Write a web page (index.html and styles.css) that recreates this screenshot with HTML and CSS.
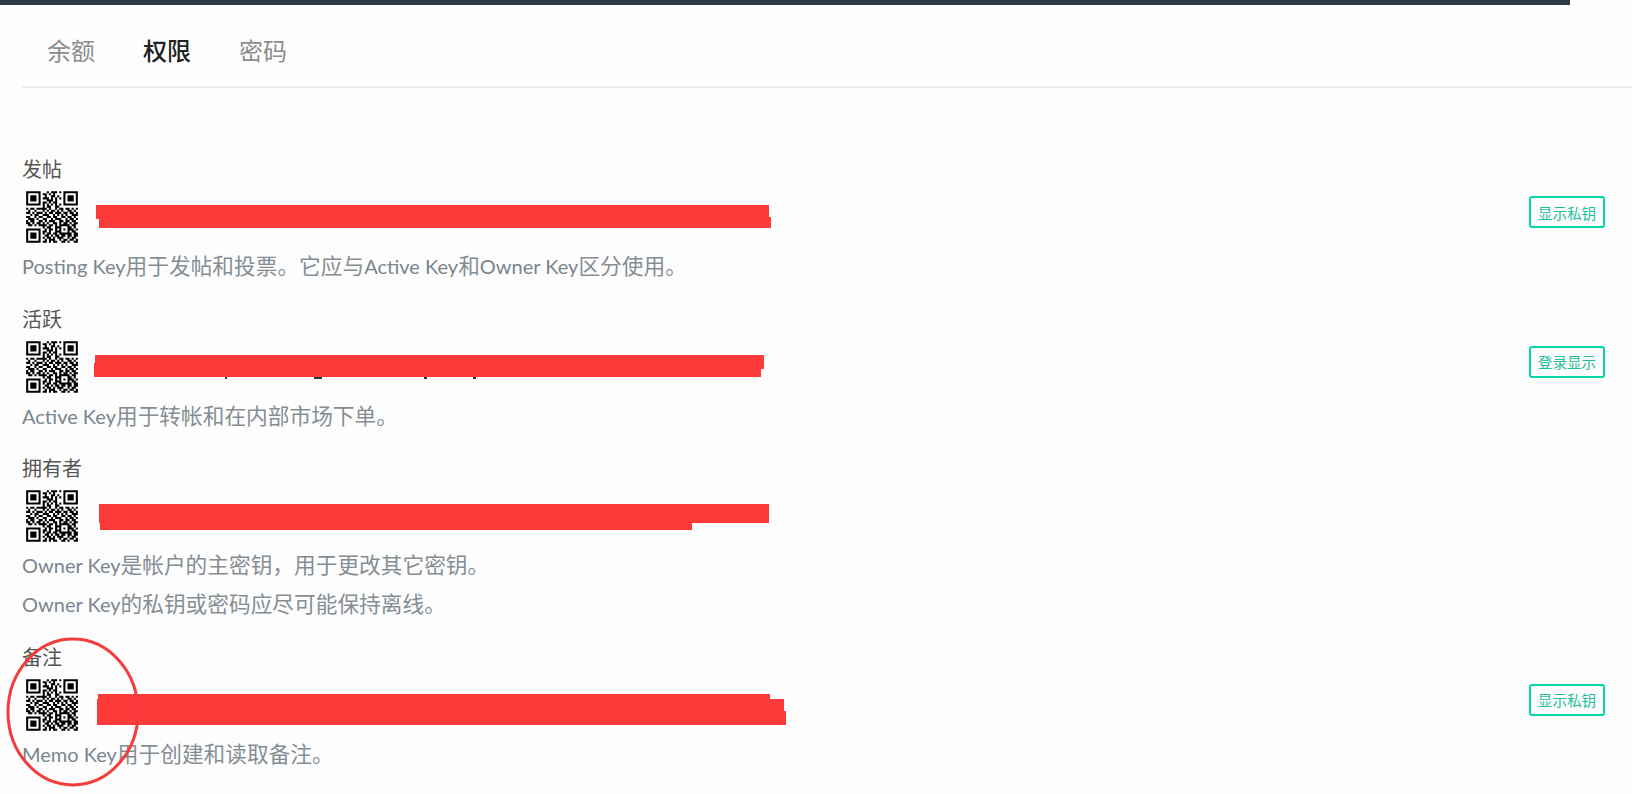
FILE: index.html
```html
<!DOCTYPE html>
<html lang="zh">
<head>
<meta charset="utf-8">
<title>权限</title>
<link rel="stylesheet" href="styles.css">
</head>
<body>
<svg class="defs" aria-hidden="true">
  <defs>
    <g id="qr">
      <rect width="29" height="29" fill="#fff"/>
      <g transform="translate(2 2)">
        <path fill="#000" fill-rule="evenodd" d="M0 0h7v7h-7zM1 1v5h5v-5zM2 2h3v3h-3zM18 0h7v7h-7zM19 1v5h5v-5zM20 2h3v3h-3zM0 18h7v7h-7zM1 19v5h5v-5zM2 20h3v3h-3z"/>
        <path stroke="#000" stroke-width="1" fill="none" d="M10 .5h1M12 .5h3M16 .5h1M8 1.5h2M11 1.5h1M13 1.5h1M9 2.5h1M12 2.5h2M15 2.5h1M8 3.5h3M12 3.5h1M14 3.5h1M16 3.5h1M10 4.5h3M14 4.5h1M8 5.5h2M11 5.5h1M13 5.5h2M8 6.5h1M10 6.5h1M12 6.5h1M14 6.5h1M16 6.5h1M8 7.5h1M10 7.5h2M14 7.5h2M0 8.5h1M2 8.5h2M5 8.5h5M11 8.5h1M14 8.5h1M16 8.5h2M19 8.5h2M22 8.5h1M24 8.5h1M1 9.5h1M4 9.5h1M8 9.5h1M10 9.5h1M12 9.5h2M15 9.5h1M17 9.5h1M20 9.5h2M23 9.5h1M0 10.5h2M3 10.5h1M5 10.5h3M9 10.5h1M11 10.5h2M14 10.5h3M18 10.5h2M21 10.5h2M24 10.5h1M2 11.5h1M4 11.5h2M8 11.5h3M13 11.5h1M15 11.5h1M17 11.5h1M19 11.5h1M22 11.5h3M0 12.5h2M4 12.5h1M6 12.5h2M10 12.5h2M13 12.5h2M17 12.5h2M20 12.5h2M23 12.5h1M1 13.5h3M5 13.5h1M8 13.5h2M12 13.5h1M14 13.5h3M19 13.5h1M21 13.5h2M24 13.5h1M0 14.5h1M2 14.5h2M6 14.5h2M9 14.5h1M11 14.5h3M16 14.5h2M19 14.5h2M22 14.5h2M0 15.5h2M3 15.5h1M5 15.5h2M8 15.5h1M10 15.5h1M13 15.5h2M16 15.5h1M18 15.5h2M21 15.5h1M23 15.5h2M1 16.5h2M4 16.5h1M6 16.5h4M11 16.5h2M14 16.5h1M16 16.5h5M22 16.5h2M8 17.5h1M10 17.5h2M14 17.5h2M16 17.5h1M20 17.5h2M23 17.5h1M9 18.5h1M11 18.5h2M14 18.5h1M16 18.5h1M18 18.5h1M20 18.5h3M24 18.5h1M8 19.5h2M11 19.5h1M14 19.5h3M20 19.5h1M22 19.5h2M8 20.5h1M10 20.5h2M13 20.5h2M16 20.5h6M23 20.5h2M9 21.5h2M12 21.5h1M14 21.5h2M17 21.5h2M20 21.5h2M23 21.5h2M8 22.5h1M10 22.5h2M13 22.5h1M15 22.5h3M20 22.5h1M22 22.5h2M9 23.5h1M11 23.5h3M16 23.5h1M18 23.5h2M21 23.5h2M24 23.5h1M8 24.5h2M11 24.5h1M13 24.5h2M17 24.5h2M20 24.5h1M23 24.5h2"/>
      </g>
    </g>
  </defs>
</svg>

<div class="topbar"></div>

<nav class="tabs">
  <a class="tab">余额</a>
  <a class="tab tab-active">权限</a>
  <a class="tab">密码</a>
</nav>

<main class="keys">
  <section class="key">
    <div class="key-label">发帖</div>
    <div class="key-row">
      <svg class="qr" viewBox="0 0 29 29"><use href="#qr"/></svg>
      <span class="mark mark-a1"></span><span class="mark mark-a2"></span>
      <button class="reveal">显示私钥</button>
    </div>
    <p class="key-note"><span class="latin">Posting Key</span>用于发帖和投票。它应与<span class="latin">Active Key</span>和<span class="latin">Owner Key</span>区分使用。</p>
  </section>

  <section class="key">
    <div class="key-label">活跃</div>
    <div class="key-row">
      <svg class="qr" viewBox="0 0 29 29"><use href="#qr"/></svg>
      <span class="speck speck-1"></span><span class="speck speck-2"></span><span class="speck speck-3"></span><span class="speck speck-4"></span>
      <span class="mark mark-b1"></span><span class="mark mark-b2"></span>
      <button class="reveal">登录显示</button>
    </div>
    <p class="key-note"><span class="latin">Active Key</span>用于转帐和在内部市场下单。</p>
  </section>

  <section class="key">
    <div class="key-label">拥有者</div>
    <div class="key-row">
      <svg class="qr" viewBox="0 0 29 29"><use href="#qr"/></svg>
      <span class="mark mark-c1"></span><span class="mark mark-c2"></span>
    </div>
    <p class="key-note"><span class="latin">Owner Key</span>是帐户的主密钥，用于更改其它密钥。</p>
    <p class="key-note"><span class="latin">Owner Key</span>的私钥或密码应尽可能保持离线。</p>
  </section>

  <section class="key">
    <div class="key-label">备注</div>
    <div class="key-row">
      <svg class="qr" viewBox="0 0 29 29"><use href="#qr"/></svg>
      <span class="mark mark-d1"></span><span class="mark mark-d2"></span><span class="mark mark-d3"></span>
      <button class="reveal">显示私钥</button>
    </div>
    <p class="key-note"><span class="latin">Memo Key</span>用于创建和读取备注。</p>
  </section>
</main>

<svg class="circle" viewBox="0 0 140 152" aria-hidden="true">
  <ellipse cx="73" cy="76" rx="65" ry="73" fill="none" stroke="#f33c3c" stroke-width="3"/>
</svg>
</body>
</html>
```

FILE: styles.css
```css
html, body {
  margin: 0;
  padding: 0;
  background: #fdfdfd;
  overflow: hidden;
}
body {
  position: relative;
  height: 794px;
  font-family: "Lato", "Noto Sans CJK SC", sans-serif;
}
.defs {
  position: absolute;
  width: 0;
  height: 0;
}
.topbar {
  width: 1570px;
  height: 5px;
  background: #2c3a48;
}
.tabs {
  display: flex;
  margin-left: 22px;
  padding: 8px 0 0 1px;
  box-sizing: border-box;
  height: 83px;
  align-items: center;
  border-bottom: 2px solid #eeeeee;
}
.tab {
  padding: 0 24px;
  font-family: "Noto Sans CJK SC", sans-serif;
  font-size: 24px;
  line-height: 30px;
  color: #8c8c8c;
}
.tab-active {
  color: #222222;
  font-weight: 500;
}
.keys {
  display: flex;
  flex-direction: column;
  margin: 66px 27px 0 22px;
}
.key {
  margin-bottom: 17.5px;
}
.key-label {
  height: 33px;
  line-height: 30px;
  font-family: "Noto Sans CJK SC", sans-serif;
  font-size: 20px;
  color: #555555;
}
.key-row {
  position: relative;
  display: flex;
  justify-content: space-between;
  align-items: flex-start;
  height: 60px;
}
.qr {
  display: block;
  width: 60px;
  height: 60px;
  filter: blur(0.4px);
}
.reveal {
  margin-top: 9px;
  width: 76px;
  height: 32px;
  padding: 0;
  background: transparent;
  border: 2px solid #06d6a9;
  border-radius: 3px;
  font-family: "Noto Sans CJK SC", sans-serif;
  font-size: 14.6px;
  color: #1ebf9b;
}
.key-note {
  margin: 0;
  height: 39px;
  line-height: 39px;
  font-size: 21.7px;
  color: #858d94;
}
.latin {
  font-size: 20px;
  color: #7a858f;
}
.mark {
  position: absolute;
  background: #fd3a3a;
}
.mark-a1 { left: 74px; top: 18px; width: 673px; height: 14px; }
.mark-a2 { left: 77px; top: 30px; width: 672px; height: 11px; }
.mark-b1 { left: 73px; top: 18px; width: 669px; height: 14px; }
.mark-b2 { left: 72px; top: 26px; width: 667px; height: 14px; }
.mark-c1 { left: 77px; top: 18px; width: 670px; height: 19px; }
.mark-c2 { left: 78px; top: 30px; width: 592px; height: 14px; }
.mark-d1 { left: 76px; top: 19px; width: 672px; height: 12px; }
.mark-d2 { left: 75px; top: 24px; width: 687px; height: 26px; }
.mark-d3 { left: 75px; top: 36px; width: 689px; height: 14px; }
.speck {
  position: absolute;
  top: 40px;
  width: 2px;
  height: 2px;
  background: #333333;
}
.speck-1 { left: 203px; }
.speck-2 { left: 292px; width: 8px; }
.speck-3 { left: 402px; width: 3px; }
.speck-4 { left: 451px; width: 3px; }
.circle {
  position: absolute;
  left: 0;
  top: 636px;
  width: 140px;
  height: 152px;
}
```
